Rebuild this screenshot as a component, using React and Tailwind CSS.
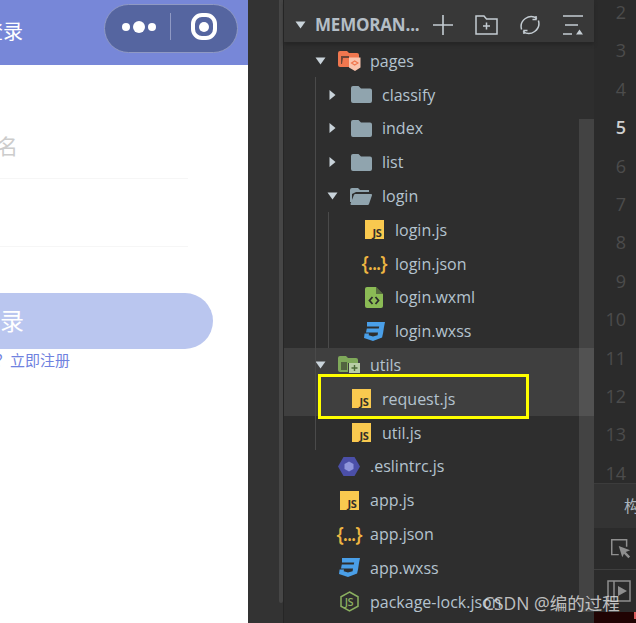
import React from "react";

const FONT = { fontFamily: '"Open Sans","Noto Sans CJK SC",sans-serif' };

function Arrow({ dir }) {
  if (!dir) return <span className="w-6 shrink-0" />;
  return (
    <span className="w-6 shrink-0 flex justify-center">
      {dir === "down" ? (
        <svg width="11" height="8" viewBox="0 0 11 8"><path d="M0.5 0.5h10L5.5 7.5z" fill="#c9d3da" /></svg>
      ) : (
        <svg width="7" height="10" viewBox="0 0 7 10"><path d="M0.5 0v10L6.5 5z" fill="#c9d3da" /></svg>
      )}
    </span>
  );
}

function Folder() {
  return (
    <svg width="21" height="17" viewBox="0 0 21 17">
      <path d="M0 2a2 2 0 0 1 2-2h5.5l2.5 2.5h9a2 2 0 0 1 2 2V15a2 2 0 0 1-2 2H2a2 2 0 0 1-2-2z" fill="#90a4ae" />
    </svg>
  );
}

function OpenFolder() {
  return (
    <svg width="22" height="17" viewBox="0 0 22 17">
      <path d="M0 2a2 2 0 0 1 2-2h6l2 2h9v2H6L2 6v8H0z" fill="#90a4ae" />
      <path d="M1.5 17a1 1 0 0 1-1-1.2L4 6.8A1.5 1.5 0 0 1 5.5 6H21a1 1 0 0 1 1 1.2L19 16a1.5 1.5 0 0 1-1.5 1z" fill="#90a4ae" />
    </svg>
  );
}

function PagesFolder() {
  return (
    <svg width="23" height="20" viewBox="0 0 23 20">
      <path d="M0 2a2 2 0 0 1 2-2h7l2 2h8a2 2 0 0 1 2 2v11a1 1 0 0 1-1 1H2a2 2 0 0 1-2-2z" fill="#f0774f" />
      <path d="M3 5h8v2H5l-1 6H3z" fill="#33302e" opacity="0.7" />
      <path d="M11 6.5h11.5v10L17 20l-6-3.5z" fill="#f9c4ae" />
      <path d="M13.5 12l3.2-2 3.2 2-3.2 2z" fill="none" stroke="#f0774f" strokeWidth="1.2" />
    </svg>
  );
}

function UtilsFolder() {
  return (
    <svg width="23" height="18" viewBox="0 0 23 18">
      <path d="M0 2a2 2 0 0 1 2-2h6l2 2h8a2 2 0 0 1 2 2v3H10v9H2a2 2 0 0 1-2-2z" fill="#7fa95a" />
      <path d="M3 6h6v8H3z" fill="#33352f" opacity="0.6" />
      <rect x="11" y="7" width="11" height="10" fill="#b9cfa6" />
      <path d="M16.5 9v6M13.5 12h6" stroke="#4d6b38" strokeWidth="1.4" />
    </svg>
  );
}

function Js() {
  return (
    <span className="w-[19px] h-[19px] bg-[#f9c94f] flex items-end justify-end pr-[2px] text-[11px] leading-[13px] font-bold text-[#33302a] tracking-[-0.3px]">
      JS
    </span>
  );
}

function Json() {
  return <span className="text-[#eeb642] text-[19px] leading-none font-semibold whitespace-nowrap tracking-[-1px]">{"{...}"}</span>;
}

function Wxml() {
  return (
    <svg width="18" height="21" viewBox="0 0 18 21">
      <path d="M2 0h9l7 7v12a2 2 0 0 1-2 2H2a2 2 0 0 1-2-2V2a2 2 0 0 1 2-2z" fill="#8bbb55" />
      <path d="M11 0l7 7h-7z" fill="#2e2e2e" opacity="0.55" />
      <path d="M7.5 10l-3 3.5 3 3.5M10.5 10l3 3.5-3 3.5" fill="none" stroke="#2c2c2c" strokeWidth="1.8" />
    </svg>
  );
}

function Css() {
  return (
    <svg width="21" height="19" viewBox="0 0 21 19">
      <path d="M3 0h18l-1 5-.9 6-1 4.5L9 19 0 16l.6-4.5h4.4l-.3 1.7L9 14.6l4.6-1.4.4-2.7H2l.8-4h12l.4-2H3z" fill="#4a9fe8" />
    </svg>
  );
}

function Eslint() {
  return (
    <svg width="22" height="19" viewBox="0 0 22 19">
      <path d="M5.5 0h11L22 9.5 16.5 19h-11L0 9.5z" fill="#4b4fa8" />
      <path d="M11 4.5l4.5 2.5v5L11 14.5 6.5 12V7z" fill="#8f95dc" />
    </svg>
  );
}

function Node() {
  return (
    <span className="relative flex w-[19px] h-[21px] items-center justify-center">
      <svg width="19" height="21" viewBox="0 0 19 21" className="absolute inset-0">
        <path d="M9.5 1L18 5.8v9.4L9.5 20 1 15.2V5.8z" fill="none" stroke="#8bb060" strokeWidth="1.5" />
      </svg>
      <span className="relative text-[11px] leading-none font-semibold text-[#8bb060] tracking-[-0.5px]">JS</span>
    </span>
  );
}

const ROWS = [
  { pad: "pl-6", arrow: "down", icon: <PagesFolder />, name: "pages" },
  { pad: "pl-[36px]", arrow: "right", icon: <Folder />, name: "classify" },
  { pad: "pl-[36px]", arrow: "right", icon: <Folder />, name: "index" },
  { pad: "pl-[36px]", arrow: "right", icon: <Folder />, name: "list" },
  { pad: "pl-[36px]", arrow: "down", icon: <OpenFolder />, name: "login" },
  { pad: "pl-[49px]", icon: <Js />, name: "login.js" },
  { pad: "pl-[49px]", icon: <Json />, name: "login.json" },
  { pad: "pl-[49px]", icon: <Wxml />, name: "login.wxml" },
  { pad: "pl-[49px]", icon: <Css />, name: "login.wxss" },
  { pad: "pl-6", arrow: "down", icon: <UtilsFolder />, name: "utils", active: true },
  { pad: "pl-[36px]", icon: <Js />, name: "request.js", active: true },
  { pad: "pl-[36px]", icon: <Js />, name: "util.js" },
  { pad: "pl-6", icon: <Eslint />, name: ".eslintrc.js" },
  { pad: "pl-6", icon: <Js />, name: "app.js" },
  { pad: "pl-6", icon: <Json />, name: "app.json" },
  { pad: "pl-6", icon: <Css />, name: "app.wxss" },
  { pad: "pl-6", icon: <Node />, name: "package-lock.json" },
];

const LINES = [2, 3, 4, 5, 6, 7, 8, 9, 10, 11, 12, 13, 14];

function Row({ r }) {
  return (
    <div className={`h-[33.8px] flex items-center text-[16px] text-[#b4c3cf] whitespace-nowrap ${r.pad} ${r.active ? "bg-[#3f3f3f]" : ""}`}>
      <Arrow dir={r.arrow} />
      <span className="w-[34px] shrink-0 flex justify-center items-center">{r.icon}</span>
      <span className="ml-1">{r.name}</span>
    </div>
  );
}

export default function App() {
  return (
    <div className="relative w-[636px] h-[623px] overflow-hidden flex bg-[#333333]" style={FONT}>
      {/* Phone preview */}
      <div className="w-[248px] shrink-0 bg-white flex flex-col overflow-hidden">
        <div className="h-[65px] bg-[#7787d8] flex items-start justify-between shrink-0">
          <span className="mt-[20px] -ml-[17px] text-[20px] leading-[24px] text-white whitespace-nowrap">登录</span>
          <div className="mt-1 mr-[10px] w-[134px] h-[49px] rounded-full bg-[#5565a0] border border-[#8f99c4] flex items-center">
            <div className="w-[51px] flex items-center justify-end gap-[3px] pb-1">
              <span className="w-[8px] h-[8px] rounded-full bg-white" />
              <span className="w-[12px] h-[12px] rounded-full bg-white" />
              <span className="w-[8px] h-[8px] rounded-full bg-white" />
            </div>
            <span className="ml-[14px] mb-1 w-px h-[27px] bg-[#8f99c4]" />
            <span className="ml-[20px] mb-1 w-[26px] h-[27px] rounded-[11px] border-[4px] border-white flex items-center justify-center">
              <span className="w-[10px] h-[10px] rounded-full bg-white" />
            </span>
          </div>
        </div>
        <div className="mt-[66px] h-[48px] w-[188px] border-b border-[#f6f6f6] flex items-start">
          <span className="-ml-[24px] text-[21px] leading-[30px] text-[#cccccc] whitespace-nowrap">姓名</span>
        </div>
        <div className="h-[68px] w-[188px] border-b border-[#f6f6f6]" />
        <div className="mt-[46px] w-[213px] h-[56px] rounded-r-[28px] bg-[#bac6ef] flex items-center">
          <span className="-ml-[24px] text-[24px] leading-[30px] text-white whitespace-nowrap">登录</span>
        </div>
        <div className="mt-px -ml-[5px] h-5 text-[15px] leading-5 text-[#6f82e0] whitespace-nowrap">？立即注册</div>
      </div>

      {/* Dark strip */}
      <div className="w-[31px] shrink-0 bg-[#333333]" />
      <div className="w-[4px] h-[603px] shrink-0 bg-[#464646] rounded-b-sm" />
      <div className="w-px shrink-0 bg-[#262626]" />

      {/* Explorer */}
      <div className="relative w-[310px] shrink-0 bg-[#2e2e2e] flex flex-col">
        <div className="h-[42px] bg-[#383838] shadow-[0_3px_3px_#262626] flex items-center pt-[8px] shrink-0 relative z-10">
          <svg width="11" height="8" viewBox="0 0 11 8" className="ml-[11px]"><path d="M0.5 0.5h10L5.5 7.5z" fill="#c9d3da" /></svg>
          <span className="ml-[9px] w-[107px] text-[17px] leading-5 font-bold text-[#b4bec6] whitespace-nowrap tracking-[-0.2px]">MEMORAN...</span>
          <svg width="20" height="20" viewBox="0 0 20 20" className="ml-[11px]" fill="none" stroke="#c4ccd2" strokeWidth="1.6">
            <path d="M10 0v20M0 10h20" />
          </svg>
          <svg width="23" height="20" viewBox="0 0 23 20" className="ml-[22px]" fill="none" stroke="#c4ccd2" strokeWidth="1.5">
            <path d="M1 1h8l2.5 3H22v15H1z" />
            <path d="M11.5 7.5v7M8 11h7" />
          </svg>
          <svg width="22" height="22" viewBox="0 0 22 22" className="ml-[21px]" fill="none" stroke="#c4ccd2" strokeWidth="1.5">
            <path d="M18 4.5A10 10 0 0 0 2.6 15.5" />
            <path d="M4 17.5A10 10 0 0 0 19.4 6.5" />
            <path d="M17 2v3.5h-3.5M5 20v-3.5h3.5" />
          </svg>
          <svg width="20" height="20" viewBox="0 0 20 20" className="ml-[22px]">
            <path d="M0 1h20M2 10h13M0 19h9" stroke="#c4ccd2" strokeWidth="1.6" fill="none" />
            <path d="M13 19.5l3.5-5 3.5 5z" fill="#c4ccd2" />
          </svg>
        </div>
        <div className="pt-[2px]">
          {ROWS.map((r) => (
            <Row key={r.name} r={r} />
          ))}
        </div>
        {/* indent guides */}
        <div className="absolute left-[31px] top-[77px] h-[373px] w-px bg-[#4a4a4a]" />
        <div className="absolute left-[44px] top-[212px] h-[136px] w-px bg-[#4a4a4a]" />
        {/* scrollbar */}
        <div className="absolute left-[295px] top-[119px] bottom-[11px] w-[15px] bg-white/[0.1]" />
        {/* tab stub */}
        <div className="absolute left-[142px] top-0 w-[90px] h-[5px] rounded-b bg-[#4a4a4a]" />
      </div>

      {/* Editor gutter + panel */}
      <div className="flex-1 min-w-0 flex flex-col bg-[#2b2b2b] overflow-hidden">
        <div className="h-[483px] shrink-0 overflow-hidden">
          {LINES.map((n) => (
            <div
              key={n}
              className={`h-[38.4px] -translate-y-[7px] pr-[10px] text-right text-[18px] leading-[38px] ${n === 5 ? "text-[#cfcfcf] font-semibold" : "text-[#4c4c4c]"}`}
            >
              {n}
            </div>
          ))}
        </div>
        <div className="h-[45px] shrink-0 bg-[#333333] border-t border-[#3c3c3c] flex items-center pl-[30px] text-[16px] text-[#aab4bc] whitespace-nowrap">
          构建
        </div>
        <div className="h-[42px] shrink-0 bg-[#2b2b2b] border-b border-[#3f3f3f] flex items-center pl-[16px]">
          <svg width="21" height="21" viewBox="0 0 24 24">
            <path d="M10 19H2V2h17v8" fill="none" stroke="#8f8f8f" strokeWidth="1.7" />
            <path d="M10 9l13 5-5 2 5 5-2 2-5-5-2 4z" fill="#8f8f8f" />
          </svg>
        </div>
        <div className="h-[42px] shrink-0 bg-[#2b2b2b] flex items-center pl-[13px]">
          <svg width="24" height="22" viewBox="0 0 24 22">
            <path d="M1 1h22v20H1zM7 1v20" fill="none" stroke="#8f8f8f" strokeWidth="1.5" />
            <path d="M11 6l9 5-9 5z" fill="#8f8f8f" />
          </svg>
        </div>
        <div className="flex-1 bg-[#200303] flex justify-end items-start">
          <span className="w-[2px] h-[7px] bg-[#d85a5a]" />
        </div>
      </div>

      {/* yellow annotation */}
      <div className="absolute left-[318px] top-[374px] w-[211px] h-[45px] border-[3px] border-[#ffff00]" />
      {/* watermark */}
      <div className="absolute left-[483px] top-[592px] text-[17.5px] leading-[22px] text-[#e6e6e6]/80 whitespace-nowrap">CSDN @编的过程</div>
    </div>
  );
}
